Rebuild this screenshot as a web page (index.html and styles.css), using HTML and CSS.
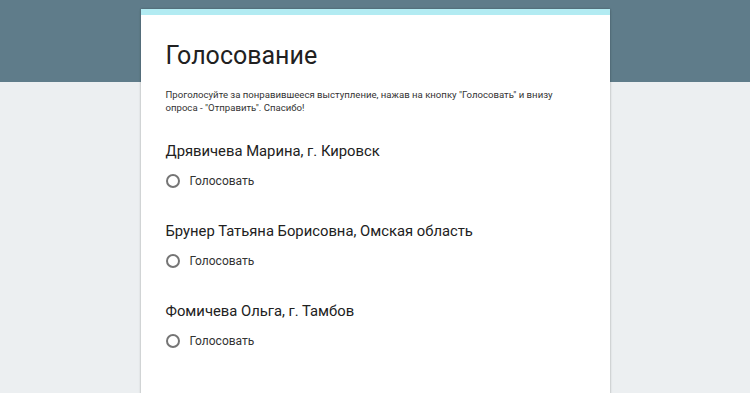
FILE: index.html
```html
<!DOCTYPE html>
<html lang="ru">
<head>
    <meta charset="UTF-8">
    <meta name="viewport" content="width=device-width, initial-scale=1.0">
    <title>Голосование</title>
    <link rel="stylesheet" href="styles.css">
</head>
<body>
    <div class="form-card">
        <div class="form-header">
            <h1>Голосование</h1>
            <p>Проголосуйте за понравившееся выступление, нажав на кнопку "Голосовать" и внизу опроса - "Отправить". Спасибо!</p>
        </div>

        <div class="question">
            <div class="question-title">Дрявичева Марина, г. Кировск</div>
            <label class="choice"><span class="radio"></span>Голосовать</label>
        </div>

        <div class="question">
            <div class="question-title">Брунер Татьяна Борисовна, Омская область</div>
            <label class="choice"><span class="radio"></span>Голосовать</label>
        </div>

        <div class="question">
            <div class="question-title">Фомичева Ольга, г. Тамбов</div>
            <label class="choice"><span class="radio"></span>Голосовать</label>
        </div>
    </div>
</body>
</html>
```

FILE: styles.css
```css
* {
    margin: 0;
    padding: 0;
    box-sizing: border-box;
}

body {
    font-family: Roboto, 'Noto Sans', sans-serif;
    background: linear-gradient(#5f7c8a 0, #5f7c8a 82px, #eceff1 82px);
    min-height: 100vh;
    padding-top: 9px;
    color: #212121;
}

.form-card {
    width: 469px;
    margin: 0 auto;
    min-height: 400px;
    background: white;
    border-top: 6px solid #b2ebf2;
    box-shadow: 0 0 2px rgba(0,0,0,0.25), 0 1px 3px rgba(0,0,0,0.1);
    padding: 24px 25px 0 25px;
}

.form-header h1 {
    font-size: 25px;
    line-height: 33px;
    font-weight: 400;
    color: #212121;
}

.form-header p {
    margin-top: 17px;
    font-size: 9.6px;
    line-height: 12.5px;
    color: #333;
}

.question {
    margin-top: 27px;
}

.question + .question {
    margin-top: 30px;
}

.question-title {
    font-size: 14.8px;
    line-height: 20px;
    color: #212121;
}

.choice {
    display: flex;
    align-items: center;
    gap: 10px;
    margin-top: 10px;
    height: 20px;
    font-size: 12px;
    color: #333;
}

.radio {
    width: 14px;
    height: 14px;
    border: 2px solid #757575;
    border-radius: 50%;
}
```
